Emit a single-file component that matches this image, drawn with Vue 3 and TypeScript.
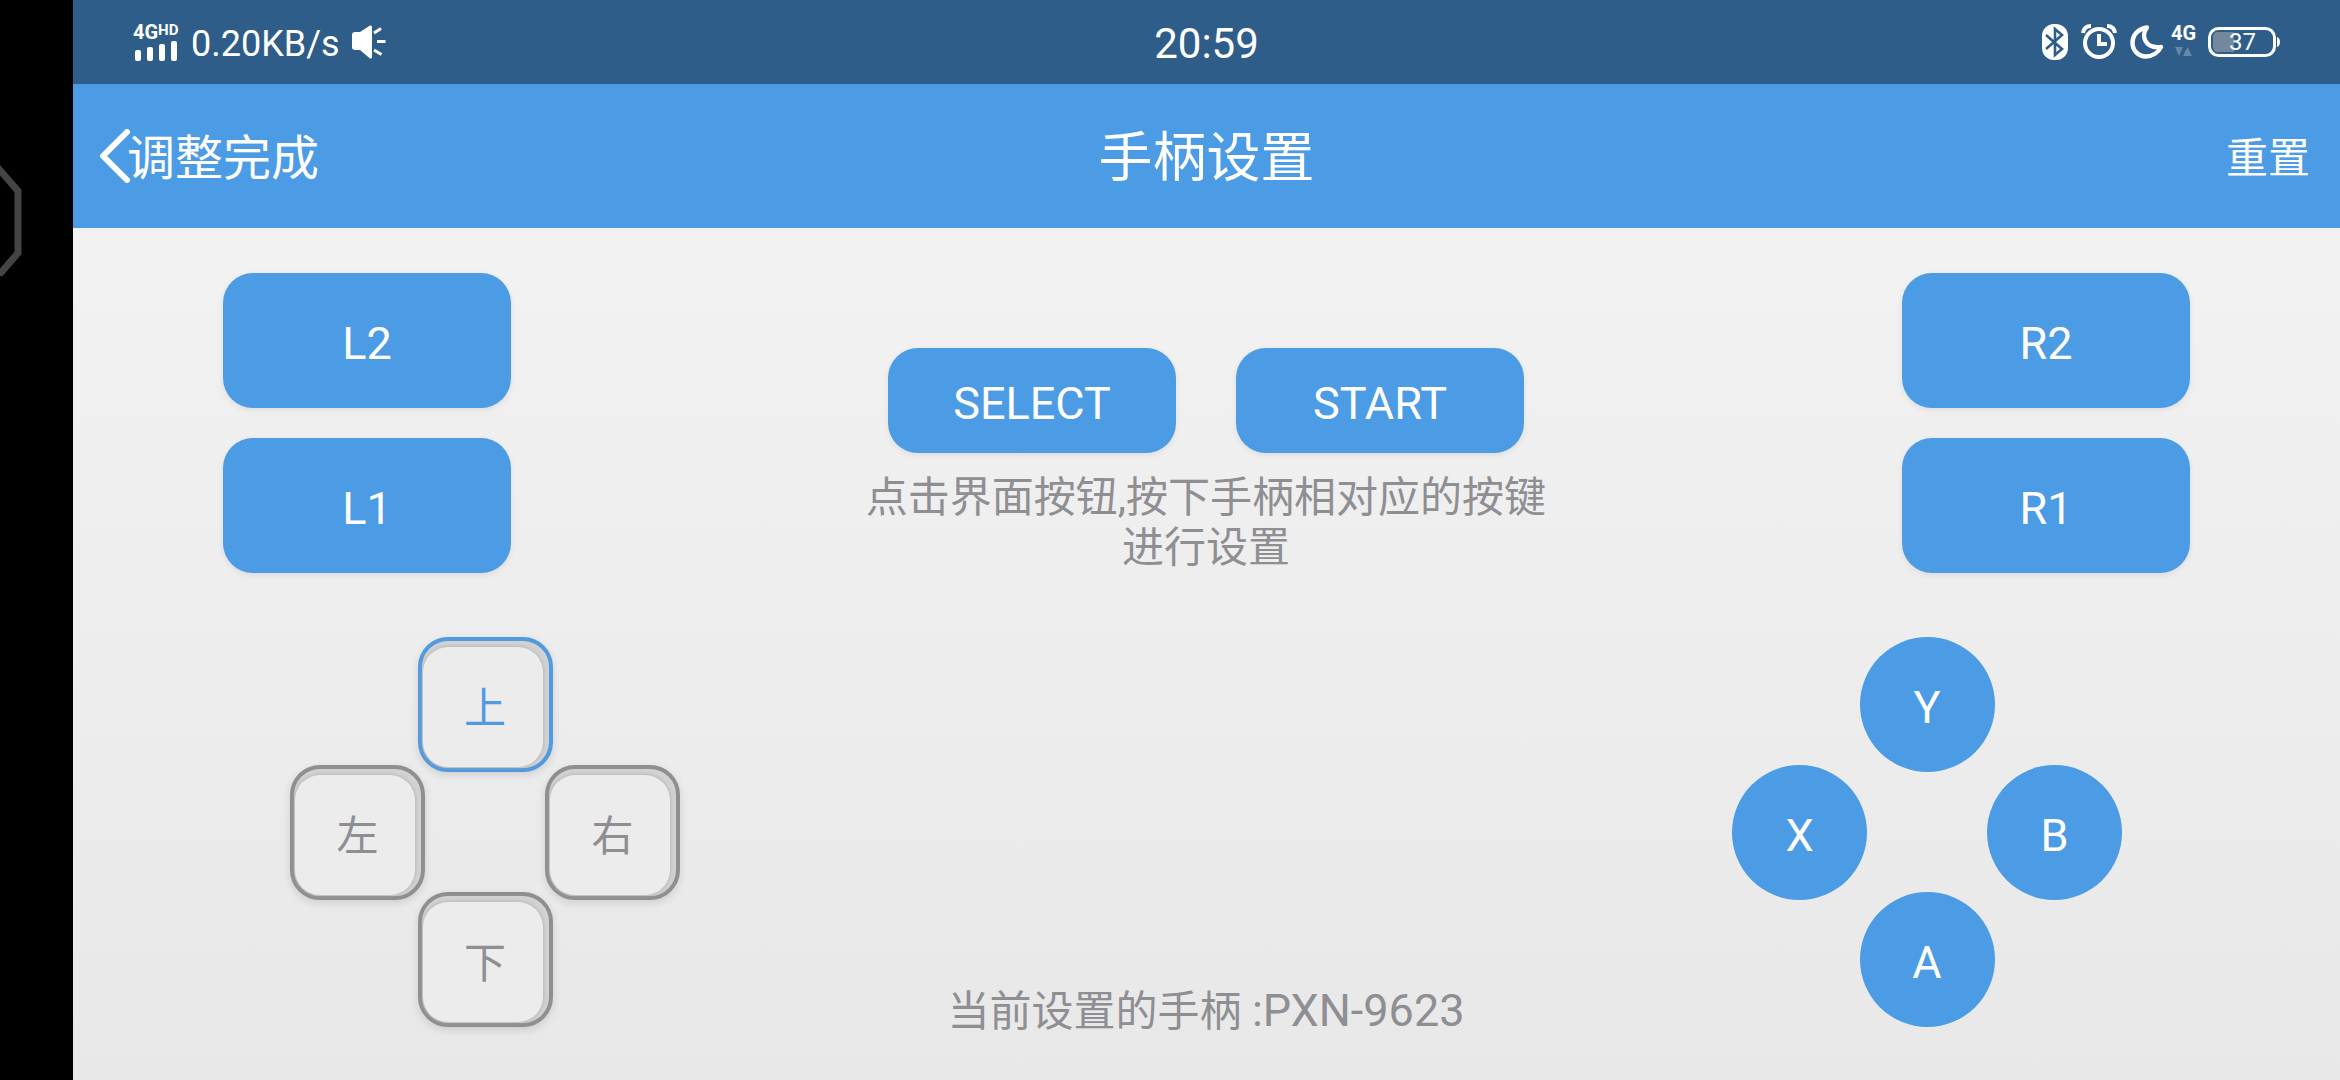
<script setup lang="ts">
import { ref } from 'vue'

interface PadKey {
  id: string
  label: string
  place: 'top' | 'left' | 'right' | 'bottom'
}

const leftShoulders: string[] = ['L2', 'L1']
const rightShoulders: string[] = ['R2', 'R1']
const menuKeys: string[] = ['SELECT', 'START']

const directions: PadKey[] = [
  { id: 'up', label: '上', place: 'top' },
  { id: 'left', label: '左', place: 'left' },
  { id: 'right', label: '右', place: 'right' },
  { id: 'down', label: '下', place: 'bottom' },
]

const actions: PadKey[] = [
  { id: 'y', label: 'Y', place: 'top' },
  { id: 'x', label: 'X', place: 'left' },
  { id: 'b', label: 'B', place: 'right' },
  { id: 'a', label: 'A', place: 'bottom' },
]

const selected = ref<string>('up')
const deviceName = 'PXN-9623'
</script>

<template>
  <div class="device">
    <aside class="cutout">
      <svg class="notch" width="24" height="112" viewBox="0 0 24 112" aria-hidden="true">
        <path d="M-8 -3 L18 27 V89 L-8 119" fill="none" stroke="#444" stroke-width="7" />
      </svg>
    </aside>

    <div class="screen">
      <div class="status">
        <div class="status-side">
          <div class="signal">
            <div class="network"><span>4G</span><span class="hd">HD</span></div>
            <svg width="44" height="21" viewBox="0 0 44 21" fill="#fff" aria-hidden="true">
              <rect x="2" y="10" width="6" height="11" rx="2" />
              <rect x="14" y="7" width="6" height="14" rx="2" />
              <rect x="26" y="4" width="6" height="17" rx="2" />
              <rect x="38" y="1" width="6" height="20" rx="2" />
            </svg>
          </div>
          <span class="speed">0.20KB/s</span>
          <svg width="34" height="34" viewBox="0 0 34 34" aria-hidden="true">
            <path d="M3 7H8L18 0.5Q20 0 20 2V32Q20 34 18 33.5L8 25H3Q0 25 0 22V10Q0 7 3 7Z" fill="#fff" />
            <path d="M22 8L29 3.500M25 16.500H33.500M22 25L29.500 29.500" stroke="#fff" stroke-width="3" fill="none" />
          </svg>
        </div>

        <time class="clock">20:59</time>

        <div class="status-side end">
          <svg width="26" height="36" viewBox="0 0 26 36" aria-hidden="true">
            <rect width="26" height="36" rx="12" fill="#fff" />
            <path d="M4 11L20 25L13 31V5L20 11L4 25" fill="none" stroke="#2e5d89" stroke-width="2.600" />
          </svg>
          <svg width="36" height="36" viewBox="0 0 36 36" fill="none" stroke="#fff" aria-hidden="true">
            <circle cx="18" cy="19" r="14" stroke-width="4" />
            <path d="M18 10V20H26" stroke-width="4" />
            <path d="M2 9Q3 2 10 2M26 2Q33 2 34 9" stroke-width="4" />
          </svg>
          <svg width="34" height="34" viewBox="0 0 34 34" aria-hidden="true">
            <path d="M17 2.500C11 10 14 24 31 22C28 28 22 31.500 16 31.500C8 31.500 2.500 25 2.500 18C2.500 10 8 4 17 2.500Z" fill="none" stroke="#fff" stroke-width="4.400" stroke-linejoin="round" />
          </svg>
          <div class="data">
            <div class="network">4G</div>
            <svg width="24" height="14" viewBox="0 0 24 14" fill="#6588a8" aria-hidden="true">
              <path d="M4 2H12L8 11ZM12 11H21L16.500 2Z" />
            </svg>
          </div>
          <div class="battery">
            <svg width="72" height="30" viewBox="0 0 72 30" aria-hidden="true">
              <rect x="1.500" y="1.500" width="65" height="27" rx="9" fill="none" stroke="#fff" stroke-width="3" />
              <path d="M10 5H26V25H10Q5 25 5 20V10Q5 5 10 5Z" fill="#73889c" />
              <path d="M69 10Q72 11 72 15Q72 19 69 20Z" fill="#fff" />
            </svg>
            <span class="level">37</span>
          </div>
        </div>
      </div>

      <header class="bar">
        <button class="bar-button back" type="button">
          <svg width="32" height="54" viewBox="0 0 32 54" aria-hidden="true">
            <path d="M28 3L4 27L28 51" fill="none" stroke="#fff" stroke-width="6" stroke-linecap="round" stroke-linejoin="round" />
          </svg>
          <span>调整完成</span>
        </button>
        <h1 class="title">手柄设置</h1>
        <button class="bar-button reset" type="button">重置</button>
      </header>

      <main class="board">
        <section class="side">
          <div class="shoulders">
            <button v-for="k in leftShoulders" :key="k" class="key tall" type="button">{{ k }}</button>
          </div>
          <div class="pad">
            <button
              v-for="k in directions"
              :key="k.id"
              class="arrow"
              :class="[k.place, { active: selected === k.id }]"
              type="button"
              @click="selected = k.id"
            ><span>{{ k.label }}</span></button>
          </div>
        </section>

        <section class="middle">
          <div class="menu">
            <button v-for="k in menuKeys" :key="k" class="key" type="button">{{ k }}</button>
          </div>
          <p class="hint">点击界面按钮,按下手柄相对应的按键进行设置</p>
          <p class="current">当前设置的手柄 <span class="name">:{{ deviceName }}</span></p>
        </section>

        <section class="side right-side">
          <div class="shoulders">
            <button v-for="k in rightShoulders" :key="k" class="key tall" type="button">{{ k }}</button>
          </div>
          <div class="pad">
            <button v-for="k in actions" :key="k.id" class="round" :class="k.place" type="button">{{ k.label }}</button>
          </div>
        </section>
      </main>
    </div>
  </div>
</template>

<style>
body {
  margin: 0;
  background: #000;
}
</style>

<style scoped>
.device {
  display: flex;
  min-height: 100vh;
  font-family: Roboto, "Noto Sans CJK SC", sans-serif;
  font-weight: 400;
  color: #8e8e93;
}

svg {
  display: block;
  flex: none;
}

button {
  margin: 0;
  padding: 0;
  border: 0;
  background: none;
  font: inherit;
  color: inherit;
  cursor: pointer;
}

.cutout {
  flex: none;
  width: 73px;
  padding-top: 164px;
  box-sizing: border-box;
  background: #000;
}

.screen {
  flex: 1;
  display: flex;
  flex-direction: column;
  min-width: 0;
}

.status {
  display: grid;
  grid-template-columns: 1fr auto 1fr;
  align-items: center;
  height: 84px;
  padding: 0 60px;
  background: #2e5d89;
  color: #fff;
}

.status-side {
  display: flex;
  align-items: center;
  gap: 12px;
}

.end {
  justify-content: flex-end;
  gap: 13px;
}

.signal {
  width: 46px;
}

.network {
  display: flex;
  font-size: 20px;
  font-weight: 700;
  line-height: 16px;
}

.hd {
  font-size: 15px;
  line-height: 12px;
}

.speed {
  padding-top: 3px;
  font-size: 36px;
  line-height: 42px;
}

.clock {
  padding-top: 3px;
  font-size: 42px;
  line-height: 48px;
}

.data {
  width: 24px;
  margin-left: -6px;
}

.data svg {
  margin-top: 4px;
}

.battery {
  display: grid;
  align-items: center;
  justify-items: center;
}

.battery > * {
  grid-area: 1 / 1;
}

.level {
  padding-right: 3px;
  font-size: 24px;
  line-height: 30px;
}

.bar {
  display: grid;
  grid-template-columns: 1fr auto 1fr;
  align-items: center;
  height: 144px;
  padding: 0 30px;
  background: #4c9be5;
  color: #fff;
}

.bar-button {
  display: flex;
  align-items: center;
}

.bar-button span,
.title,
.reset {
  padding-top: 6px;
}

.back {
  justify-self: start;
  margin-left: -4px;
  font-size: 48px;
  line-height: 60px;
}

.back svg {
  margin-right: -4px;
}

.reset {
  justify-self: end;
  font-size: 42px;
  line-height: 54px;
}

.title {
  margin: 0;
  font-size: 54px;
  font-weight: inherit;
  line-height: 66px;
}

.board {
  flex: 1;
  display: flex;
  justify-content: space-between;
  padding: 45px 150px 53px;
  background: linear-gradient(#f2f2f2, #e8e8e8);
}

.side {
  display: flex;
  flex-direction: column;
  justify-content: space-between;
  gap: 60px;
  width: 457px;
}

.right-side {
  width: 458px;
}

.shoulders {
  display: flex;
  flex-direction: column;
  gap: 30px;
}

.right-side .shoulders,
.side .pad {
  align-self: flex-end;
}

.right-side .pad {
  align-self: flex-start;
}

.key {
  width: 288px;
  height: 105px;
  padding-top: 6px;
  border-radius: 30px;
  background: #4c9be5;
  box-shadow: 0 2px 6px rgba(0, 0, 0, 0.08);
  color: #fff;
  font-size: 45px;
}

.tall {
  height: 135px;
}

.pad {
  display: grid;
  grid-template: repeat(3, 130px) / repeat(3, 130px);
}

.arrow,
.round {
  width: 135px;
  height: 135px;
}

.top {
  grid-area: 1 / 2;
  place-self: start center;
}

.left {
  grid-area: 2 / 1;
  place-self: center start;
}

.right {
  grid-area: 2 / 3;
  place-self: center end;
}

.bottom {
  grid-area: 3 / 2;
  place-self: end center;
}

.arrow {
  position: relative;
  box-sizing: border-box;
  border: 4px solid #8e8e93;
  border-radius: 30px;
  background: #d2d2d2;
  box-shadow: 0 3px 8px rgba(0, 0, 0, 0.12);
  font-size: 42px;
}

.arrow::before {
  content: "";
  position: absolute;
  inset: 6px 6px 1px 1px;
  border-radius: 25px;
  background: #ececec;
  box-shadow: 0 0 4px #acacac;
}

.arrow span {
  position: relative;
}

.active {
  border-color: #4f9ae0;
  color: #4f9ae0;
}

.round {
  padding-top: 6px;
  border-radius: 50%;
  background: #4c9be5;
  color: #fff;
  font-size: 45px;
}

.middle {
  flex: 1;
  display: flex;
  flex-direction: column;
  align-items: center;
  padding-top: 75px;
}

.menu {
  display: flex;
  gap: 60px;
}

.hint {
  max-width: 700px;
  margin: 20px 0 0;
  font-size: 42px;
  line-height: 50px;
  text-align: center;
}

.current {
  margin: auto 0 0;
  font-size: 42px;
  line-height: 30px;
}

.name {
  font-size: 45px;
}
</style>
